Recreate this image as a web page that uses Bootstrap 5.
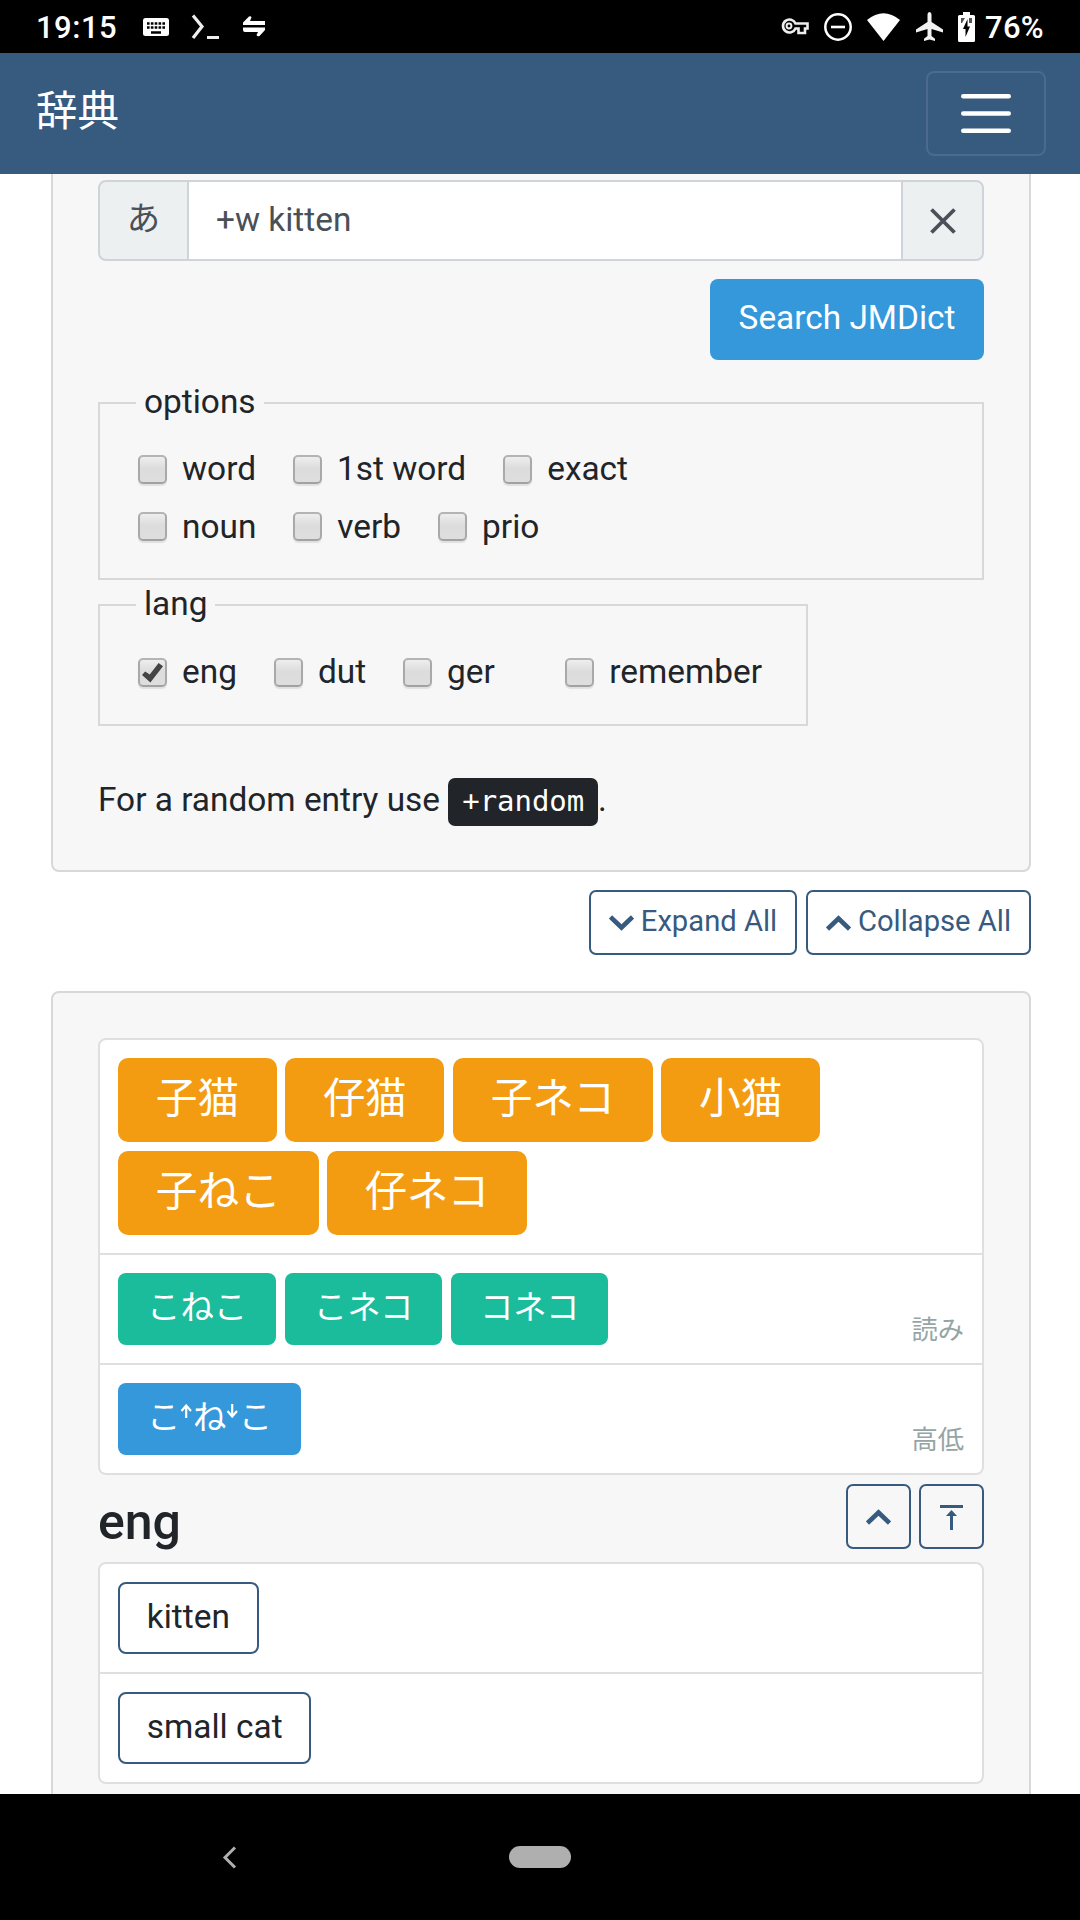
<!DOCTYPE html>
<html lang="ja">
<head>
<meta charset="utf-8">
<meta name="viewport" content="width=device-width, initial-scale=1">
<title>辞典</title>
<link href="https://cdn.jsdelivr.net/npm/bootstrap@5.3.0/dist/css/bootstrap.min.css" rel="stylesheet">
<style>
  html { font-size: 33.4px; }
  body { font-family: Roboto, "Noto Sans CJK JP", sans-serif; line-height: 1.5; color: #212529; background: #fff; }
  .screen { width: 1080px; height: 1920px; }
  .statusbar { height: 53px; padding: 0 36px 0 36px; background: #000; color: #fff; font-size: 31px; font-weight: 500; line-height: 53px; }
  .statusbar .clock { width: 107px; letter-spacing: .5px; line-height: 51px; padding-top: 2px; }
  .statusbar svg, .icon-svg { display: block; flex: none; }
  .status-icons { gap: 15.4px; }
  .battery-text { margin-left: -5.6px; line-height: 51px; padding-top: 2px; letter-spacing: .3px; }
  .appbar { height: 121px; padding: 0 34px 0 36px; background: #375a7f; }
  .appbar .navbar-brand { font-size: 41.5px; line-height: 60px; padding: 0 0 3px; margin: 0; color: #fff; }
  .appbar .navbar-toggler { width: 120px; height: 85px; padding: 0; border: 2px solid rgba(255,255,255,.1); border-radius: 8px; }
  .content-area { height: 1620px; padding: 0 49px 0 51px; }
  .panel { background: #f7f7f7; border: 2px solid #d8d8d8; border-radius: 8px; padding: 45px; }
  .panel-search { height: 698px; border-top: 0; border-radius: 0 0 8px 8px; padding-top: 6px; }
  .search-row { height: 81px; }
  .search-row .input-group-text { background: #ecf0f1; border: 2px solid #ced4da; color: #495057; justify-content: center; padding: 0 0 3px; border-radius: 8px; }
  .search-row .kana-mode { width: 91px; }
  .search-row .form-control { border: 2px solid #ced4da; color: #495057; padding: 0 27px; margin-left: -2px !important; }
  .search-row .clear-btn { width: 83px; padding: 0; margin-left: -2px !important; }
  .btn-search { width: 274px; height: 81px; margin-top: 18px; padding: 0 0 2px; background: #3498db; color: #fff; border: 0; border-radius: 8px; }
  .optbox { border: 2px solid #d8d8d8; padding: 13px 36px 23px 38px; }
  .optbox legend { float: none; width: auto; font-size: 1rem; line-height: 48px; height: 50px; padding: 0 8px; margin: 0 0 0 -2px; }
  .optbox-options { margin-top: 18px; }
  .optbox-lang { width: 710px; padding-top: 14px; padding-right: 44px; }
  .optrow { height: 57px; gap: 37px; }
  .optrow label { gap: 15px; line-height: 57px; }
  .optrow .opt-text { line-height: 55px; padding-bottom: 2px; }
  .optrow input { appearance: none; width: 29px; height: 29px; margin: 0; border: 2px solid #aaa; border-color: #b4b4b4 #a9a9a9 #a2a2a2; border-radius: 5px; background: linear-gradient(#eee, #dcdcdc 45%, #dedede); box-shadow: 0 2px 1px rgba(0,0,0,.09); }
  .optrow input:checked::after { content: ""; display: block; width: 21px; height: 20px; margin: 3px 0 0 2px; background: #444; clip-path: polygon(0 60%, 15% 43%, 37% 58%, 79% 0, 100% 16%, 40% 98%); }
  .hint { margin: 49px 0 0; line-height: 50px; height: 50px; }
  .hint kbd { font-family: "DejaVu Sans Mono", monospace; font-size: 29px; padding: 6px 14px 8px; border-radius: 7px; background: #212529; color: #fff; line-height: 34px; display: inline-block; height: 48px; letter-spacing: -.06px; }
  .btn-tool { height: 65px; border: 2px solid #375a7f; border-radius: 7px; color: #375a7f; font-size: 29.2px; line-height: 40px; padding: 0 0 4px; gap: 7px; }
  .tool-expand { width: 208px; }
  .tool-collapse { width: 225px; }
  .tool-square { width: 65px; }
  .square-pair { gap: 8px; }
  .top-icon { margin-top: 5px; }
  .chevron { margin-top: 5px; }
  .toolbar-row { margin-top: 18px; gap: 9px; }
  .panel-entry { margin-top: 36px; height: 900px; }
  .list-group { border-radius: 8px; }
  .list-group-item { border: 2px solid #dfdfdf; padding: 18px; background: #fff; }
  .list-group-item + .list-group-item { border-top-width: 0; }
  .list-forms { gap: 9px 8.6px; }
  .form-tag { height: 84px; padding: 0 37.7px 2px; border: 0; border-radius: 10px; background: #f39c12; color: #fff; font-size: 41.75px; line-height: 58px; }
  .read-tag, .gloss-tag { height: 72px; padding: 0 29px 2px; border: 0; border-radius: 8px; background: #1abc9c; color: #fff; font-size: 33.4px; line-height: 50px; }
  .pitch-tag { background: #3498db; }
  .gloss-tag { background: #fff; border: 2px solid #375a7f; color: #212529; padding: 0 26.8px 3px; }
  .arrow { margin: 0 0 14px; }
  .row-label { font-size: 26.3px; line-height: 38px; color: #95a5a6; margin-bottom: -4px; }
  .lang-head { height: 87px; padding-bottom: 4px; }
  .lang-head h4 { font-size: 50px; line-height: 60px; margin: 0; padding-top: 11px; font-weight: 500; }
  .sysnav { height: 126px; background: #000; padding: 52px 0 0 222px; gap: 272px; }
  .home-pill { width: 62px; height: 22px; border-radius: 11px; background: #afafaf; }
</style>
</head>
<body>
<div class="screen d-flex flex-column overflow-hidden">
  <div class="statusbar d-flex align-items-center flex-shrink-0">
    <span class="clock">19:15</span>
    <svg width="26" height="18" viewBox="0 0 26 18"><rect width="26" height="18" rx="2.5" fill="#fff"/><path d="M4 5.5H22M4 9.5H22" stroke="#000" stroke-width="2.6" stroke-dasharray="2.6 1.25"/><path d="M8 14.5H18" stroke="#000" stroke-width="2.5"/></svg>
    <svg width="74" height="26" viewBox="0 0 74 26"><path d="M24 1.500L33 12.500L24 24" fill="none" stroke="#eee" stroke-width="3.200"/><path d="M38 23.500H50" stroke="#eee" stroke-width="3"/></svg>
    <svg width="22" height="21" viewBox="0 0 22 21"><path d="M6 .5Q8-.3 8.500 1.500L7 5H22V9H0V6.500ZM0 11.500H22V14L16.500 20Q14.500 21 13.500 19L15 16H2Q0 16 0 14Z" fill="#fff"/></svg>
    <div class="status-icons ms-auto d-flex align-items-center">
      <svg width="28" height="17" viewBox="0 0 28 17"><path d="M14.500 5.500H26.500V10.500H24V15H17.500V10.500H14.500A6.500 6.500 0 1 1 14.500 5.500Z" fill="none" stroke="#eee" stroke-width="2.6"/><circle cx="8" cy="8" r="2.4" fill="none" stroke="#eee" stroke-width="2"/></svg>
      <svg width="28" height="28" viewBox="0 0 28 28"><circle cx="14" cy="14" r="12.700" fill="none" stroke="#fff" stroke-width="2.500"/><path d="M7 14H21" stroke="#fff" stroke-width="2.600"/></svg>
      <svg width="33" height="28" viewBox="0 0 33 28"><path d="M0 7Q16.500-6.500 33 7L16.500 28Z" fill="#fff"/></svg>
      <svg width="27" height="29" viewBox="0 0 27 29"><path d="M11.500 2.500Q11.500 0 13.500 0T15.500 2.500V10L27 17.500V20.500L15.500 17V24L19 26.800V29L13.500 27.400L8 29V26.800L11.500 24V17L0 20.500V17.500L11.500 10Z" fill="#f2f2f2"/></svg>
      <svg width="17" height="30" viewBox="0 0 17 30"><path d="M5 0H12V3H15.500Q17 3 17 4.500V28.500Q17 30 15.500 30H1.500Q0 30 0 28.500V4.500Q0 3 1.500 3H5Z" fill="#fff"/><path d="M3 6H7L4 11H3ZM11 6H14V11H11Z" fill="#555"/><path d="M9.500 7L5 17H7.500V25L12 14.500H9.500Z" fill="#000"/></svg>
      <span class="battery-text">76%</span>
    </div>
  </div>

  <nav class="appbar navbar navbar-dark flex-shrink-0 d-flex justify-content-between align-items-center">
    <a class="navbar-brand" href="#">辞典</a>
    <button class="navbar-toggler d-flex align-items-center justify-content-center" type="button" aria-label="menu">
      <svg class="icon-svg" width="50" height="39" viewBox="0 0 50 39"><path d="M2.300 2.300H47.700M2.300 19.500H47.700M2.300 36.700H47.700" stroke="#fff" stroke-width="4.600" stroke-linecap="round"/></svg>
    </button>
  </nav>

  <main class="content-area flex-shrink-0 overflow-hidden">
    <section class="panel panel-search">
      <div class="input-group search-row">
        <span class="input-group-text kana-mode">あ</span>
        <input class="form-control" type="text" value="+w kitten">
        <button class="input-group-text clear-btn" type="button" aria-label="clear">
          <svg class="icon-svg" width="26" height="26" viewBox="0 0 26 26"><path d="M1.500 1.500L24.500 24.500M24.500 1.500L1.500 24.500" stroke="#495057" stroke-width="3.800"/></svg>
        </button>
      </div>
      <div class="d-flex justify-content-end"><button class="btn btn-search" type="button">Search JMDict</button></div>
      <fieldset class="optbox optbox-options">
        <legend>options</legend>
        <div class="optrow d-flex">
          <label class="d-flex align-items-center"><input type="checkbox"><span class="opt-text">word</span></label>
          <label class="d-flex align-items-center"><input type="checkbox"><span class="opt-text">1st word</span></label>
          <label class="d-flex align-items-center"><input type="checkbox"><span class="opt-text">exact</span></label>
        </div>
        <div class="optrow d-flex">
          <label class="d-flex align-items-center"><input type="checkbox">noun</label>
          <label class="d-flex align-items-center"><input type="checkbox">verb</label>
          <label class="d-flex align-items-center"><input type="checkbox">prio</label>
        </div>
      </fieldset>
      <fieldset class="optbox optbox-lang">
        <legend>lang</legend>
        <div class="optrow d-flex">
          <label class="d-flex align-items-center"><input type="checkbox" checked><span class="opt-text">eng</span></label>
          <label class="d-flex align-items-center"><input type="checkbox"><span class="opt-text">dut</span></label>
          <label class="d-flex align-items-center"><input type="checkbox"><span class="opt-text">ger</span></label>
          <label class="d-flex align-items-center ms-auto"><input type="checkbox"><span class="opt-text">remember</span></label>
        </div>
      </fieldset>
      <p class="hint">For a random entry use <kbd>+random</kbd>.</p>
    </section>

    <div class="toolbar-row d-flex justify-content-end">
      <button class="btn btn-tool tool-expand d-flex align-items-center justify-content-center" type="button"><svg class="icon-svg chevron" width="25" height="16" viewBox="0 0 25 16"><path d="M1.500 2L12.500 12.500L23.500 2" fill="none" stroke="#375a7f" stroke-width="4.600"/></svg>Expand All</button>
      <button class="btn btn-tool tool-collapse d-flex align-items-center justify-content-center" type="button"><svg class="icon-svg chevron" width="25" height="16" viewBox="0 0 25 16"><path d="M1.500 14L12.500 3.500L23.500 14" fill="none" stroke="#375a7f" stroke-width="4.600"/></svg>Collapse All</button>
    </div>

    <section class="panel panel-entry">
      <div class="list-group">
        <div class="list-group-item list-forms d-flex flex-wrap">
          <button class="btn form-tag">子猫</button><button class="btn form-tag">仔猫</button><button class="btn form-tag">子ネコ</button><button class="btn form-tag">小猫</button><button class="btn form-tag">子ねこ</button><button class="btn form-tag">仔ネコ</button>
        </div>
        <div class="list-group-item list-forms d-flex">
          <button class="btn read-tag">こねこ</button><button class="btn read-tag">こネコ</button><button class="btn read-tag">コネコ</button>
          <span class="row-label ms-auto align-self-end">読み</span>
        </div>
        <div class="list-group-item list-forms d-flex">
          <button class="btn read-tag pitch-tag d-flex align-items-center">こ<svg class="icon-svg arrow" width="12.500" height="14" viewBox="0 0 12.500 14"><path d="M6.200 14V1.500M1.500 7L6.200 1.500L11 7" fill="none" stroke="#fff" stroke-width="2.200"/></svg>ね<svg class="icon-svg arrow" width="12.500" height="14" viewBox="0 0 12.500 14"><path d="M6.200 0V12.500M1.500 7L6.200 12.500L11 7" fill="none" stroke="#fff" stroke-width="2.200"/></svg>こ</button>
          <span class="row-label ms-auto align-self-end">高低</span>
        </div>
      </div>
      <div class="lang-head d-flex align-items-center justify-content-between">
        <h4>eng</h4>
        <div class="square-pair d-flex">
          <button class="btn btn-tool tool-square d-flex align-items-center justify-content-center" type="button" aria-label="collapse"><svg class="icon-svg chevron" width="25" height="16" viewBox="0 0 25 16"><path d="M1.500 14L12.500 3.500L23.500 14" fill="none" stroke="#375a7f" stroke-width="4.600"/></svg></button>
          <button class="btn btn-tool tool-square d-flex align-items-center justify-content-center" type="button" aria-label="top"><svg class="icon-svg top-icon" width="23" height="25" viewBox="0 0 23 25"><path d="M0 0H23V3H0ZM11.500 5L17 11H13V25H10V11H6Z" fill="#375a7f"/></svg></button>
        </div>
      </div>
      <div class="list-group">
        <div class="list-group-item d-flex"><button class="btn gloss-tag">kitten</button></div>
        <div class="list-group-item d-flex"><button class="btn gloss-tag">small cat</button></div>
      </div>
    </section>
  </main>

  <div class="sysnav d-flex flex-shrink-0">
    <svg class="icon-svg" width="15" height="23" viewBox="0 0 15 23"><path d="M13 1.500L3 11.500L13 21.500" fill="none" stroke="#afafaf" stroke-width="3"/></svg>
    <div class="home-pill"></div>
  </div>
</div>
<script src="https://cdn.jsdelivr.net/npm/bootstrap@5.3.0/dist/js/bootstrap.bundle.min.js"></script>
</body>
</html>
